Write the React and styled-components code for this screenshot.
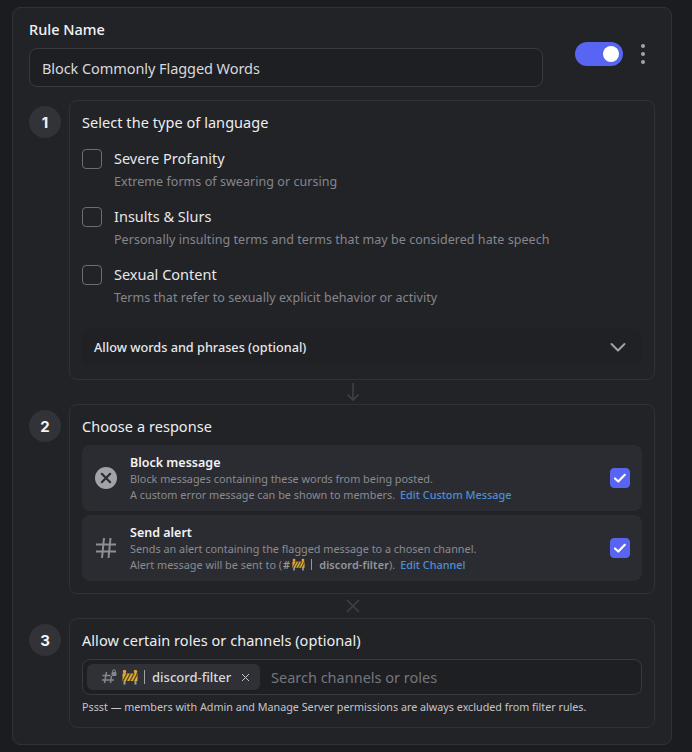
import styled, { createGlobalStyle } from "styled-components";

const GlobalStyle = createGlobalStyle`
   html, body {
      margin: 0;
      padding: 0;
      background: #1b1c20;
   }
   body {
      font-family: "Noto Sans", "Liberation Sans", sans-serif;
      color: #f2f3f5;
   }
   * {
      box-sizing: border-box;
   }
`;

const Page = styled.div`
   width: 692px;
   height: 752px;
   padding: 7px 20px 0 12px;
`;

const Panel = styled.main`
   width: 660px;
   height: 738px;
   padding: 12px 16px 0 16px;
   background: #222327;
   border: 1px solid #303136;
   border-radius: 8px;
`;

const NameRow = styled.div`
   display: flex;
   align-items: flex-start;
`;

const NameColumn = styled.div`
   width: 514px;
`;

const Label = styled.div`
   font-size: 14.5px;
   font-weight: 500;
   line-height: 18px;
   margin-bottom: 10px;
   color: #f2f3f5;
`;

const NameInput = styled.div`
   height: 39px;
   padding: 0 12px;
   display: flex;
   align-items: center;
   font-size: 14.5px;
   letter-spacing: -0.07px;
   color: #d8d9dc;
   background: #1e1f23;
   border: 1px solid #393a40;
   border-radius: 8px;
`;

const Toggle = styled.div`
   width: 48px;
   height: 24px;
   margin: 22px 0 0 32px;
   padding: 4px;
   display: flex;
   justify-content: flex-end;
   background: #5865f2;
   border-radius: 12px;
`;

const ToggleKnob = styled.span`
   width: 16px;
   height: 16px;
   background: #fff;
   border-radius: 50%;
`;

const Dots = styled.div`
   margin: 24px 0 0 18px;
   display: flex;
   flex-direction: column;
   gap: 4px;
`;

const Dot = styled.span`
   width: 4px;
   height: 4px;
   background: #a2a3a9;
   border-radius: 50%;
`;

const Step = styled.section`
   display: flex;
   gap: 8px;
   margin-top: ${({ $top }) => $top}px;
`;

const StepNumber = styled.div`
   flex: none;
   width: 32px;
   height: 32px;
   margin-top: 6px;
   display: flex;
   align-items: center;
   justify-content: center;
   font-family: "Inter", sans-serif;
   font-size: 15px;
   font-weight: 700;
   color: #f2f3f5;
   background: #323338;
   border-radius: 50%;
`;

const Card = styled.div`
   width: 586px;
   height: ${({ $height }) => $height}px;
   padding: 11px 12px;
   border: 1px solid #303136;
   border-radius: 8px;
`;

const CardTitle = styled.h2`
   margin: 0;
   font-size: 14.5px;
   font-weight: 400;
   line-height: 20px;
   letter-spacing: 0.05px;
   color: #eceef0;
`;

const OptionList = styled.div`
   margin-top: 17px;
`;

const Option = styled.div`
   display: flex;
   gap: 12px;
   height: 58px;
`;

const Checkbox = styled.span`
   flex: none;
   width: 20px;
   height: 20px;
   display: flex;
   align-items: center;
   justify-content: center;
   border: 1px solid ${({ $checked }) => ($checked ? "#5865f2" : "#6d6e75")};
   background: ${({ $checked }) => ($checked ? "#5865f2" : "transparent")};
   border-radius: 4px;
`;

const OptionText = styled.div`
   margin-top: -1px;
`;

const OptionName = styled.div`
   font-size: 14.5px;
   line-height: 20px;
   color: #e6e7ea;
`;

const OptionHint = styled.div`
   margin-top: 6px;
   font-size: 12.5px;
   line-height: 16px;
   letter-spacing: 0.05px;
   color: #85868d;
`;

const Accordion = styled.div`
   margin-top: 6px;
   height: 36px;
   padding: 0 15px 0 12px;
   display: flex;
   align-items: center;
   justify-content: space-between;
   font-size: 12.7px;
   font-weight: 500;
   color: #e6e7ea;
   background: #202125;
   border-radius: 8px;
`;

const Connector = styled.div`
   height: 24px;
   margin-left: 22px;
   display: flex;
   align-items: center;
   justify-content: center;
   color: #3f4045;
`;

const ResponseList = styled.div`
   margin-top: 9px;
   display: flex;
   flex-direction: column;
   gap: 4px;
`;

const Response = styled.div`
   height: 66px;
   padding: 0 12px;
   display: flex;
   align-items: center;
   background: #2b2c31;
   border-radius: 8px;
`;

const ResponseIcon = styled.div`
   flex: none;
   width: 24px;
   height: 24px;
   margin-right: 12px;
   display: flex;
   align-items: center;
   justify-content: center;
   color: #a2a3a9;
`;

const ResponseBody = styled.div`
   flex: 1;
   padding-top: 2px;
`;

const ResponseName = styled.div`
   font-size: 12.5px;
   font-weight: 600;
   line-height: 16px;
   color: #f2f3f5;
`;

const ResponseText = styled.div`
   font-size: 10.85px;
   line-height: 16px;
   color: #8a8b91;
`;

const ChannelName = styled.span`
   margin-left: 1px;
   font-weight: 600;
   letter-spacing: 0.15px;
   color: #96979d;
`;

const InlineDivider = styled.span`
   display: inline-block;
   width: 1px;
   height: 11px;
   margin: 0 7px 0 6px;
   vertical-align: -1px;
   background: #96979d;
`;

const Link = styled.a`
   margin-left: 5px;
   font-weight: 500;
   color: #4c8fd6;
`;

const TagInput = styled.div`
   margin-top: 9px;
   height: 36px;
   padding: 0 4px;
   display: flex;
   align-items: center;
   gap: 11px;
   background: #1e1f23;
   border: 1px solid #393a40;
   border-radius: 8px;
`;

const Chip = styled.div`
   width: 173px;
   height: 26px;
   padding: 0 10px 0 14px;
   display: flex;
   align-items: center;
   font-size: 13px;
   font-weight: 500;
   color: #d8d9dc;
   background: #303136;
   border-radius: 6px;
`;

const ChipDivider = styled.span`
   width: 1px;
   height: 14px;
   margin: 0 7px 0 6px;
   background: #a2a3a9;
`;

const ChipName = styled.span`
   flex: 1;
`;

const Placeholder = styled.span`
   font-size: 14.5px;
   color: #75767c;
`;

const Note = styled.div`
   margin-top: 4px;
   font-size: 10.75px;
   line-height: 16px;
   color: #c4c5c9;
`;

const Check = () => (
   <svg width="14" height="14" viewBox="0 0 14 14" fill="none">
      <path d="M2 7.5 5.3 10.5 11.8 3.8" stroke="#fff" strokeWidth="2.2" strokeLinecap="round" strokeLinejoin="round" />
   </svg>
);

// the construction sign emoji from the channel name
const Barrier = ({ size }) => (
   <svg width={size} height={size} viewBox="0 0 16 16" style={{ verticalAlign: "-2px", marginLeft: 2 }}>
      <path d="M2.5 2v13.5M13.5 2v13.5" stroke="#9aa0a8" strokeWidth="2" />
      <rect x="0.5" y="4.5" width="15" height="7.5" fill="#d9ab3a" />
      <path d="M1 12 5 4.5M4.5 12 8.5 4.5M8 12 12 4.5M11.5 12 15.5 4.5" stroke="#5b4a1c" strokeWidth="1.4" />
      <circle cx="2.5" cy="2.5" r="1.7" fill="#e8a030" />
      <circle cx="13.5" cy="2.5" r="1.7" fill="#e8a030" />
   </svg>
);

const App = () => {
   return (
      <>
         <GlobalStyle />
         <Page>
            <Panel>
               <NameRow>
                  <NameColumn>
                     <Label>Rule Name</Label>
                     <NameInput>Block Commonly Flagged Words</NameInput>
                  </NameColumn>
                  <Toggle>
                     <ToggleKnob />
                  </Toggle>
                  <Dots>
                     <Dot />
                     <Dot />
                     <Dot />
                  </Dots>
               </NameRow>

               <Step $top={13}>
                  <StepNumber>1</StepNumber>
                  <Card $height={280}>
                     <CardTitle>Select the type of language</CardTitle>
                     <OptionList>
                        <Option>
                           <Checkbox />
                           <OptionText>
                              <OptionName>Severe Profanity</OptionName>
                              <OptionHint>Extreme forms of swearing or cursing</OptionHint>
                           </OptionText>
                        </Option>
                        <Option>
                           <Checkbox />
                           <OptionText>
                              <OptionName>Insults &amp; Slurs</OptionName>
                              <OptionHint>Personally insulting terms and terms that may be considered hate speech</OptionHint>
                           </OptionText>
                        </Option>
                        <Option>
                           <Checkbox />
                           <OptionText>
                              <OptionName>Sexual Content</OptionName>
                              <OptionHint>Terms that refer to sexually explicit behavior or activity</OptionHint>
                           </OptionText>
                        </Option>
                     </OptionList>
                     <Accordion>
                        Allow words and phrases (optional)
                        <svg width="18" height="18" viewBox="0 0 18 18" fill="none">
                           <path d="M2.5 6 9 12.5 15.5 6" stroke="#a2a3a9" strokeWidth="2" strokeLinecap="round" strokeLinejoin="round" />
                        </svg>
                     </Accordion>
                  </Card>
               </Step>

               <Connector>
                  <svg width="14" height="20" viewBox="0 0 14 20" fill="none">
                     <path d="M7 1v17M1.5 12.5 7 18l5.5-5.5" stroke="currentColor" strokeWidth="1.6" />
                  </svg>
               </Connector>

               <Step $top={0}>
                  <StepNumber>2</StepNumber>
                  <Card $height={190}>
                     <CardTitle>Choose a response</CardTitle>
                     <ResponseList>
                        <Response>
                           <ResponseIcon>
                              <svg width="24" height="24" viewBox="0 0 24 24">
                                 <circle cx="12" cy="12" r="11" fill="currentColor" />
                                 <path d="M7.8 7.8 16.2 16.2M16.2 7.8 7.8 16.2" stroke="#2b2c31" strokeWidth="2.2" strokeLinecap="round" />
                              </svg>
                           </ResponseIcon>
                           <ResponseBody>
                              <ResponseName>Block message</ResponseName>
                              <ResponseText>Block messages containing these words from being posted.</ResponseText>
                              <ResponseText>
                                 A custom error message can be shown to members.
                                 <Link>Edit Custom Message</Link>
                              </ResponseText>
                           </ResponseBody>
                           <Checkbox $checked>
                              <Check />
                           </Checkbox>
                        </Response>
                        <Response>
                           <ResponseIcon>
                              <svg width="24" height="24" viewBox="0 0 24 24" fill="none">
                                 <path d="M10 2 8 22M16.5 2 14.5 22M2 8.5h20M2 15.5h20" stroke="#8e8f95" strokeWidth="2" />
                              </svg>
                           </ResponseIcon>
                           <ResponseBody>
                              <ResponseName>Send alert</ResponseName>
                              <ResponseText>Sends an alert containing the flagged message to a chosen channel.</ResponseText>
                              <ResponseText>
                                 Alert message will be sent to (
                                 <ChannelName>
                                    #<Barrier size={13} />
                                    <InlineDivider />
                                    discord-filter
                                 </ChannelName>
                                 ).
                                 <Link>Edit Channel</Link>
                              </ResponseText>
                           </ResponseBody>
                           <Checkbox $checked>
                              <Check />
                           </Checkbox>
                        </Response>
                     </ResponseList>
                  </Card>
               </Step>

               <Connector>
                  <svg width="14" height="14" viewBox="0 0 14 14" fill="none">
                     <path d="M1 1 13 13M13 1 1 13" stroke="currentColor" strokeWidth="1.6" />
                  </svg>
               </Connector>

               <Step $top={0}>
                  <StepNumber>3</StepNumber>
                  <Card $height={110}>
                     <CardTitle>Allow certain roles or channels (optional)</CardTitle>
                     <TagInput>
                        <Chip>
                           <svg width="16" height="16" viewBox="0 0 16 16" fill="none" style={{ marginRight: 3 }}>
                              <path d="M5.5 3 3.5 14M10.5 7 9.5 14M1.5 6.5h8M1 11h12" stroke="#85868d" strokeWidth="1.5" />
                              <rect x="10.5" y="3" width="5" height="4" rx="1" fill="#85868d" />
                              <path d="M11.7 3V2a1.3 1.3 0 0 1 2.6 0v1" stroke="#85868d" />
                           </svg>
                           <Barrier size={16} />
                           <ChipDivider />
                           <ChipName>discord-filter</ChipName>
                           <svg width="9" height="9" viewBox="0 0 9 9" fill="none">
                              <path d="M1 1 8 8M8 1 1 8" stroke="#c4c5c9" strokeWidth="1" />
                           </svg>
                        </Chip>
                        <Placeholder>Search channels or roles</Placeholder>
                     </TagInput>
                     <Note>Pssst — members with Admin and Manage Server permissions are always excluded from filter rules.</Note>
                  </Card>
               </Step>
            </Panel>
         </Page>
      </>
   );
};

export default App;
